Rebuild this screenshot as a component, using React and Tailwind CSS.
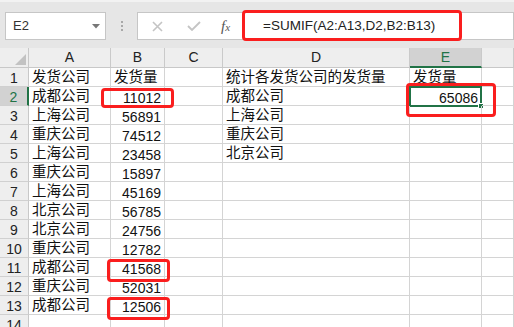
import React from "react";

const colA = ["发货公司", "成都公司", "上海公司", "重庆公司", "上海公司", "重庆公司", "上海公司", "北京公司", "北京公司", "重庆公司", "成都公司", "重庆公司", "成都公司"];
const colB = ["发货量", "11012", "56891", "74512", "23458", "15897", "45169", "56785", "24756", "12782", "41568", "52031", "12506"];
const colD = ["统计各发货公司的发货量", "成都公司", "上海公司", "重庆公司", "北京公司"];
const colE = ["发货量", "65086"];

const grid = "grid grid-cols-[29px_82px_54px_58px_187px_72px_1fr]";

function Cell({ children, right, selected }) {
  return (
    <div
      className={`relative flex items-end h-[19px] border-r border-b border-[#d4d4d4] overflow-visible whitespace-nowrap ${
        right ? "justify-end pr-[3px]" : "pl-[3px]"
      }`}
    >
      <span className={right ? "leading-[14px] text-[14px]" : "leading-[15px] text-[14.5px] pb-[1px]"}>{children}</span>
      {selected && (
        <div className="absolute -left-[1px] -top-[1px] w-[73px] h-[21px] border-2 border-[#217346]">
          <div className="absolute -right-[4px] -bottom-[4px] w-[6px] h-[6px] bg-[#217346] border border-white" />
        </div>
      )}
    </div>
  );
}

function RowHead({ n, active }) {
  return (
    <div
      className={`flex items-end justify-center h-[19px] border-b border-[#d0d0d0] text-[14px] leading-[16px] ${
        active ? "bg-[#d2d2d2] text-[#217346] border-r-2 border-r-[#217346]" : "bg-[#eeeeee] text-[#222] border-r border-r-[#c8c8c8]"
      }`}
    >
      {n}
    </div>
  );
}

function ColHead({ label, active }) {
  return (
    <div
      className={`flex items-center justify-center h-[20px] border-r border-[#cacaca] text-[14px] ${
        active ? "bg-[#d2d2d2] text-[#217346] border-b-2 border-b-[#217346]" : "bg-[#eeeeee] text-[#222] border-b border-b-[#c8c8c8]"
      }`}
    >
      {label}
    </div>
  );
}

function RedBox({ className }) {
  return <div className={`absolute border-[3px] border-[#fa1e1e] rounded-[4px] ${className}`} />;
}

export default function App() {
  const rows = Array.from({ length: 14 }, (_, i) => i);

  return (
    <div className="relative w-[514px] h-[327px] overflow-hidden bg-white font-['Liberation_Sans','Noto_Sans_CJK_SC',sans-serif] text-[#111]">
      {/* formula bar */}
      <div className="h-[48px] bg-[#e6e6e6] border-t-2 border-[#f2f2f2] flex items-start pt-[10px]">
        <div className="ml-[5px] w-[101px] h-[28px] bg-white border border-[#c6c6c6] flex items-center pl-[7px] pr-[5px] text-[13px] text-[#333]">
          <span className="flex-1">E2</span>
          <svg width="8" height="5" viewBox="0 0 8 5">
            <polygon points="0,0 8,0 4,4.5" fill="#777" />
          </svg>
        </div>
        <div className="w-[31px] h-[28px] flex flex-col items-center justify-center gap-[2px]">
          <div className="w-[2px] h-[2px] bg-[#a8a8a8]" />
          <div className="w-[2px] h-[2px] bg-[#a8a8a8]" />
          <div className="w-[2px] h-[2px] bg-[#a8a8a8]" />
        </div>
        <div className="w-[107px] h-[28px] bg-white border border-[#c6c6c6] border-r-0 flex items-center">
          <svg className="ml-[14px]" width="11" height="11" viewBox="0 0 11 11">
            <path d="M1 1 L10 10 M10 1 L1 10" stroke="#c4c4c4" strokeWidth="1.6" />
          </svg>
          <svg className="ml-[24px]" width="14" height="10" viewBox="0 0 14 10">
            <path d="M1 5 L5 9 L13 1" stroke="#c4c4c4" strokeWidth="1.8" fill="none" />
          </svg>
          <span className="ml-[20px] font-['Liberation_Serif',serif] italic text-[15px] text-[#555]">
            f<span className="text-[11px]">x</span>
          </span>
        </div>
        <div className="flex-1 h-[28px] bg-white border border-[#c6c6c6] border-l-0 flex items-center pl-[19px] text-[13.5px] text-[#222]">
          =SUMIF(A2:A13,D2,B2:B13)
        </div>
      </div>

      {/* column headers */}
      <div className={grid}>
        <div className="relative h-[20px] bg-[#eeeeee] border-r border-b border-[#c8c8c8]">
          <svg className="absolute right-[2px] bottom-[2px]" width="11" height="11" viewBox="0 0 11 11">
            <polygon points="11,0 11,11 0,11" fill="#c2c2c2" />
          </svg>
        </div>
        <ColHead label="A" />
        <ColHead label="B" />
        <ColHead label="C" />
        <ColHead label="D" />
        <ColHead label="E" active />
        <ColHead label="" />
      </div>

      {/* rows */}
      {rows.map((i) => (
        <div key={i} className={grid}>
          <RowHead n={i + 1} active={i === 1} />
          <Cell>{colA[i]}</Cell>
          <Cell right={i > 0}>{colB[i]}</Cell>
          <Cell />
          <Cell>{colD[i]}</Cell>
          <Cell right={i === 1} selected={i === 1}>{colE[i]}</Cell>
          <Cell />
        </div>
      ))}

      {/* annotations */}
      <RedBox className="left-[242px] top-[10px] w-[220px] h-[31px]" />
      <RedBox className="left-[101px] top-[88px] w-[73px] h-[20px]" />
      <RedBox className="left-[406px] top-[83px] w-[90px] h-[34px]" />
      <RedBox className="left-[107px] top-[259px] w-[63px] h-[23px]" />
      <RedBox className="left-[107px] top-[297px] w-[63px] h-[23px]" />
    </div>
  );
}
